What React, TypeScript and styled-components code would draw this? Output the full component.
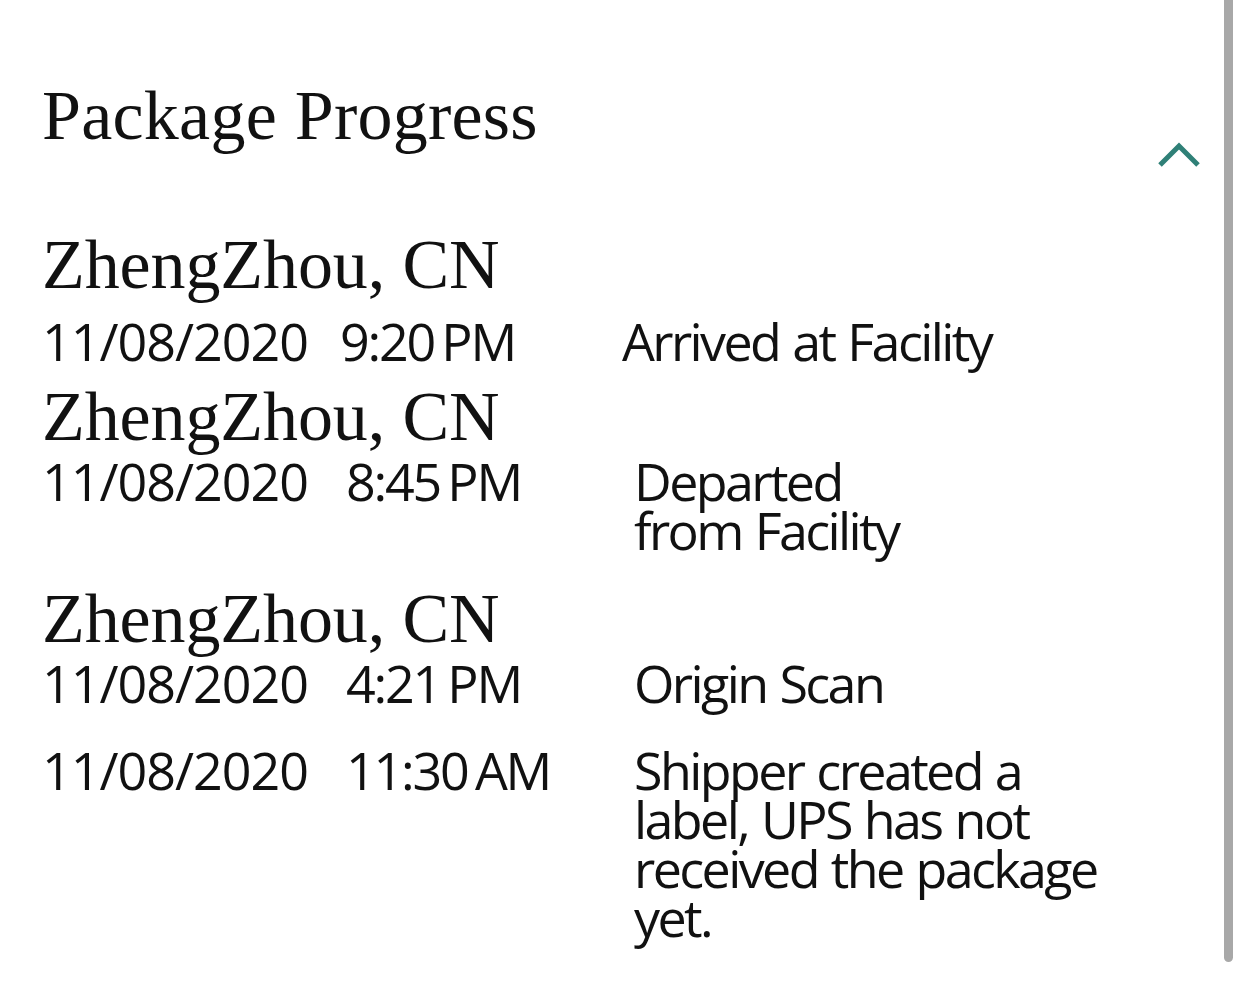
import styled, { createGlobalStyle } from "styled-components";

const GlobalStyle = createGlobalStyle`
  html, body {
    margin: 0;
    padding: 0;
    background: #ffffff;
  }
  body {
    font-family: "Open Sans", "Noto Sans", sans-serif;
    color: #111111;
  }
`;

type Entry = {
  city?: string;
  date: string;
  time: string;
  status: string[];
  top: number;
  detailTop: number;
  compact?: boolean;
};

const entries: Entry[] = [
  {
    city: "ZhengZhou, CN",
    date: "11/08/2020",
    time: "9:20 PM",
    status: ["Arrived at Facility"],
    top: 67,
    detailTop: 21,
    compact: true,
  },
  {
    city: "ZhengZhou, CN",
    date: "11/08/2020",
    time: "8:45 PM",
    status: ["Departed", "from Facility"],
    top: 22,
    detailTop: 9,
  },
  {
    city: "ZhengZhou, CN",
    date: "11/08/2020",
    time: "4:21 PM",
    status: ["Origin Scan"],
    top: 35,
    detailTop: 9,
  },
  {
    date: "11/08/2020",
    time: "11:30 AM",
    status: ["Shipper created a", "label, UPS has not", "received the package", "yet."],
    top: 38,
    detailTop: 0,
  },
];

export default function App() {
  return (
    <>
      <GlobalStyle />
      <Page>
        <Content>
          <Header>
            <Title>Package Progress</Title>
            <Toggle aria-label="Collapse">
              <svg width="44" height="28" viewBox="0 0 44 28">
                <polyline
                  points="2,25 21,6 40,25"
                  fill="none"
                  stroke="#2f8077"
                  strokeWidth="5"
                />
              </svg>
            </Toggle>
          </Header>
          {entries.map((entry, index) => (
            <EntryBlock key={index} top={entry.top}>
              {entry.city && <City>{entry.city}</City>}
              <Detail top={entry.detailTop} compact={entry.compact}>
                <DateText>{entry.date}</DateText>
                <TimeText>{entry.time}</TimeText>
                <Status>
                  {entry.status.map((line, i) => (
                    <StatusLine key={i}>{line}</StatusLine>
                  ))}
                </Status>
              </Detail>
            </EntryBlock>
          ))}
        </Content>
        <ScrollTrack>
          <ScrollThumb />
        </ScrollTrack>
      </Page>
    </>
  );
}

const Page = styled.div`
  display: flex;
  width: 1242px;
  height: 999px;
  overflow: hidden;
`;

const Content = styled.div`
  flex: 1;
  padding: 76px 22px 0 42px;
`;

const Header = styled.div`
  display: flex;
  justify-content: space-between;
  align-items: flex-start;
`;

const Title = styled.h1`
  margin: 0;
  font-family: "Liberation Serif", "Times New Roman", serif;
  font-weight: 400;
  font-size: 70px;
  line-height: 80px;
  letter-spacing: 0.25px;
  color: #111111;
`;

const Toggle = styled.button`
  border: 0;
  background: none;
  padding: 0;
  margin: 64px 0 0 0;
  width: 44px;
  height: 28px;
  cursor: pointer;
  display: flex;
`;

const EntryBlock = styled.div<{ top: number }>`
  margin-top: ${(p) => p.top}px;
`;

const City = styled.div`
  font-family: "Liberation Serif", "Times New Roman", serif;
  font-size: 70px;
  line-height: 60px;
  letter-spacing: -0.1px;
  color: #111111;
`;

const Detail = styled.div<{ top: number; compact?: boolean }>`
  display: grid;
  grid-template-columns: ${(p) => (p.compact ? "298px 282px" : "304px 288px")} 1fr;
  margin-top: ${(p) => p.top}px;
  font-size: 52px;
  line-height: 49px;
`;

const DateText = styled.div`
  letter-spacing: -1px;
`;

const TimeText = styled.div`
  letter-spacing: -2.2px;
  word-spacing: -4px;
`;

const Status = styled.div`
  display: flex;
  flex-direction: column;
`;

const StatusLine = styled.div`
  height: 49px;
  letter-spacing: -2.6px;
  word-spacing: 2px;
  white-space: nowrap;
`;

const ScrollTrack = styled.div`
  width: 18px;
  padding-right: 9px;
  box-sizing: border-box;
  display: flex;
  justify-content: flex-end;
`;

const ScrollThumb = styled.div`
  width: 9px;
  height: 962px;
  background: #a8a8a8;
  border-radius: 0 0 5px 5px;
`;
